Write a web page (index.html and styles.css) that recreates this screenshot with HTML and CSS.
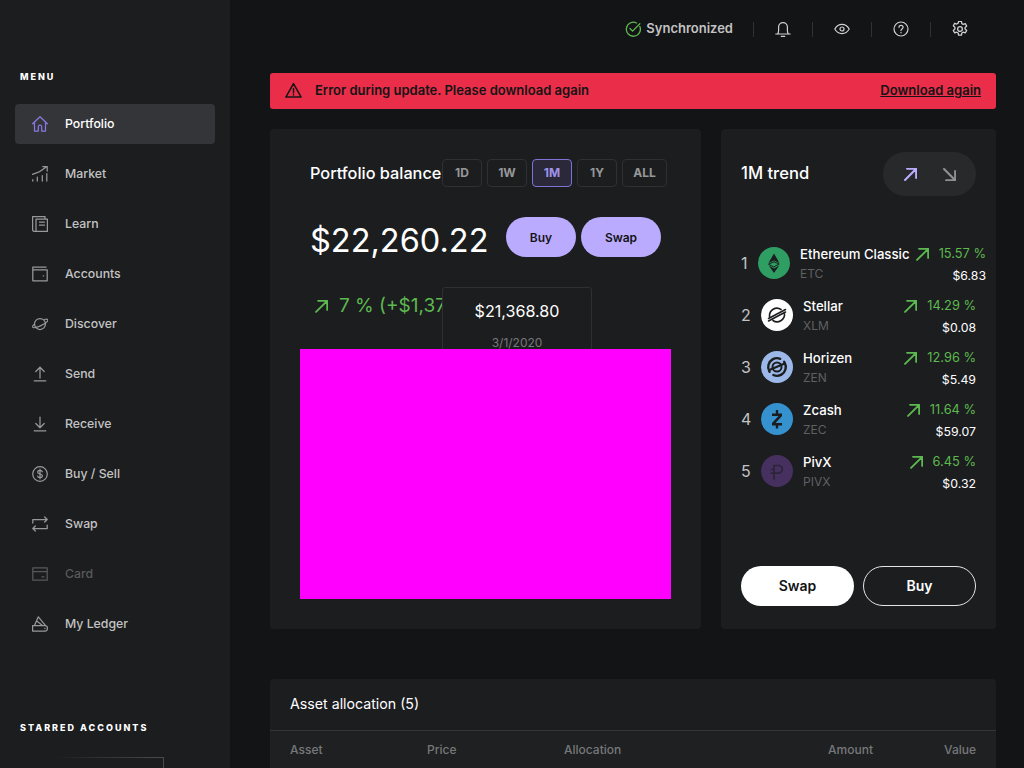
FILE: index.html
```html
<!DOCTYPE html>
<html lang="en">
<head>
    <meta charset="UTF-8">
    <meta name="viewport" content="width=device-width, initial-scale=1.0">
    <title>Portfolio</title>
    <link rel="stylesheet" href="styles.css">
</head>
<body>
    <div class="app">
        <!-- Sidebar -->
        <aside class="sidebar">
            <div class="side-title menu-title">MENU</div>
            <nav class="menu">
                <a class="menu-item active" href="#">
                    <svg class="menu-icon" viewBox="0 0 16 16"><path d="M.6 7.800 8 .8l7.400 7M2.500 6.300v8.700h3.800v-4.200a1.700 1.700 0 0 1 3.400 0V15h3.800V6.300"/></svg>
                    Portfolio
                </a>
                <a class="menu-item" href="#">
                    <svg class="menu-icon" viewBox="0 0 16 16"><path d="M.5 8.300C4 7 7.500 6.500 10 4L14.500.8M10.800.6h4.400V5M.8 13.500v1.500M5.300 11v4M10.300 9.500V15M14.800 7.500V15"/></svg>
                    Market
                </a>
                <a class="menu-item" href="#">
                    <svg class="menu-icon" viewBox="0 0 16 16"><path d="M13 3V.6H.6v12.900a1.900 1.900 0 0 0 1.900 1.900h12.900V3H4v12.300M7.500 6.200h5M7.500 9.200h5"/></svg>
                    Learn
                </a>
                <a class="menu-item" href="#">
                    <svg class="menu-icon" viewBox="0 0 16 16"><path d="M14 1.200H.8v13.600h14.400V3.800H.8M11.200 9.800h.4"/></svg>
                    Accounts
                </a>
                <a class="menu-item" href="#">
                    <svg class="menu-icon" viewBox="0 0 16 16"><circle cx="8" cy="8" r="5.500"/><path d="M12.600 3.500c1.800-.5 3-.4 3.200.3.400 1.300-2.700 3.900-6.800 5.800-4.200 1.900-7.800 2.600-8.400 1.400-.3-.7.400-1.700 1.800-2.900"/></svg>
                    Discover
                </a>
                <a class="menu-item" href="#">
                    <svg class="menu-icon" viewBox="0 0 16 16"><path d="M8 12V1.200M3.800 5.500 8 1.200l4.200 4.300M2.200 14.800h11.600"/></svg>
                    Send
                </a>
                <a class="menu-item" href="#">
                    <svg class="menu-icon" viewBox="0 0 16 16"><path d="M8 1v10.800M3.800 7.500 8 11.800l4.200-4.300M2.200 14.800h11.600"/></svg>
                    Receive
                </a>
                <a class="menu-item" href="#">
                    <svg class="menu-icon" viewBox="0 0 16 16"><circle cx="8" cy="8" r="7.300"/><path d="M10.300 5.800C10 4.800 9 4.400 8 4.400c-1.300 0-2.300.7-2.300 1.800C5.700 8.600 10.400 7.400 10.400 9.800c0 1.100-1 1.800-2.400 1.800-1.100 0-2.100-.5-2.400-1.500M8 3.200v9.600"/></svg>
                    Buy / Sell
                </a>
                <a class="menu-item" href="#">
                    <svg class="menu-icon" viewBox="0 0 16 16"><path d="M.8 7V3.500h14.400M12.700 1l2.500 2.500L12.700 6M15.200 9v3.500H.8M3.300 10 .8 12.500 3.300 15"/></svg>
                    Swap
                </a>
                <a class="menu-item disabled" href="#">
                    <svg class="menu-icon" viewBox="0 0 16 16"><path d="M.8 1.800h14.400v12.400H.8zM.8 5.500h14.400M9.800 10.800h2.200"/></svg>
                    Card
                </a>
                <a class="menu-item" href="#">
                    <svg class="menu-icon" viewBox="0 0 16 16"><path d="M.6 9.500h12.400a2.400 2.400 0 0 1 2.400 2.400v.8a2.400 2.400 0 0 1-2.400 2.300H.6zM2.500 9.500 6.300.8l7.300 8.900M5 5.300l5.500 4.200M12.700 12.300h.3"/></svg>
                    My Ledger
                </a>
            </nav>
            <div class="side-title starred-title">STARRED ACCOUNTS</div>
            <div class="starred-box"></div>
        </aside>

        <main class="main">
            <!-- Top bar -->
            <header class="topbar">
                <div class="sync">
                    <svg class="sync-icon" viewBox="0 0 16 16"><path d="M14.800 5.500A7 7 0 1 1 11.500 2M5 7.500l2.600 2.600L14.800 2.800"/></svg>
                    Synchronized
                </div>
                <span class="top-sep"></span>
                <button class="top-btn"><svg viewBox="0 0 16 16"><path d="M.8 13h14.400M2.600 13c.8-1 1-2 1-3.500V6a4.400 4.400 0 0 1 8.800 0v3.500c0 1.500.2 2.500 1 3.500M6.300 15.400h3.400"/></svg></button>
                <span class="top-sep"></span>
                <button class="top-btn"><svg viewBox="0 0 16 16"><path d="M.8 8C2.500 5 5 3.400 8 3.400S13.500 5 15.200 8c-1.700 3-4.200 4.600-7.200 4.600S2.500 11 .8 8z"/><circle cx="8" cy="8" r="2"/></svg></button>
                <span class="top-sep"></span>
                <button class="top-btn"><svg viewBox="0 0 16 16"><circle cx="8" cy="8" r="7"/><path d="M6 6.300C6 5 7 4.400 8 4.400s2.100.7 2.100 1.900c0 1.600-2.100 1.700-2.100 3.100M8 11.300v.5"/></svg></button>
                <span class="top-sep"></span>
                <button class="top-btn"><svg viewBox="0.600 0.600 14.800 14.800"><circle cx="8" cy="8" r="2.200"/><path d="M6.700 1h2.600l.4 2 1.300.7 1.900-.7 1.300 2.300-1.500 1.300v1.500l1.500 1.300-1.300 2.200-1.900-.6-1.300.7-.4 2H6.700l-.4-2-1.300-.7-1.900.6-1.300-2.200 1.500-1.300V6.300L1.800 5l1.300-2.300 1.900.7 1.300-.7z"/></svg></button>
            </header>

            <div class="alert">
                <svg class="alert-icon" viewBox="0 0 16 16"><path d="M8 1.500.8 14.200h14.400zM8 6v4.200M8 11.800v.4"/></svg>
                <span class="alert-text">Error during update. Please download again</span>
                <a class="alert-link" href="#">Download again</a>
            </div>

            <div class="cards">
                <section class="card balance">
                    <div class="balance-head">
                        <h2 class="balance-title">Portfolio balance</h2>
                        <div class="ranges">
                            <button class="range">1D</button>
                            <button class="range">1W</button>
                            <button class="range selected">1M</button>
                            <button class="range">1Y</button>
                            <button class="range">ALL</button>
                        </div>
                    </div>
                    <div class="amount-row">
                        <div class="amount">$22,260.22</div>
                        <div class="amount-actions">
                            <button class="pill pill-buy">Buy</button>
                            <button class="pill pill-swap">Swap</button>
                        </div>
                    </div>
                    <div class="change">
                        <svg class="change-icon" viewBox="1.500 2 12.500 12.500"><path d="M2.500 13.500 13 3M4.500 2.800h8.700v8.700"/></svg>
                        7 % (+$1,371.42)
                    </div>
                    <div class="tip">
                        <div class="tip-value">$21,368.80</div>
                        <div class="tip-date">3/1/2020</div>
                    </div>
                    <div class="chart"></div>
                </section>

                <section class="card trend">
                    <div class="trend-head">
                        <h2 class="trend-title">1M trend</h2>
                        <div class="toggle">
                            <svg class="toggle-up" viewBox="1.500 2 12.500 12.500"><path d="M2.500 13.500 13 3M4.500 2.800h8.700v8.700"/></svg>
                            <svg class="toggle-down" viewBox="1.500 1.500 12.500 12.500"><path d="M2.500 2.500 13 13M13.200 4.500v8.700H4.500"/></svg>
                        </div>
                    </div>
                    <ul class="coins">
                        <li class="coin coin-wide">
                            <span class="rank">1</span>
                            <svg class="coin-logo" viewBox="0 0 32 32"><circle cx="16" cy="16" r="16" fill="#2f9e63"/><path d="M16 6.500 10.500 16 16 13.500 21.500 16z" fill="#1c1d1f"/><path d="M10.800 17 16 14.800 21.200 17 16 19.800z" fill="#2f9e63" stroke="#1c1d1f"/><path d="M10.800 18.500 16 26l5.200-7.500L16 21.500z" fill="#1c1d1f"/></svg>
                            <div class="coin-name"><b>Ethereum Classic</b><span>ETC</span></div>
                            <div class="coin-nums">
                                <div class="coin-pct"><svg viewBox="1.500 2 12.500 12.500"><path d="M2.500 13.500 13 3M4.500 2.800h8.700v8.700"/></svg>15.57 %</div>
                                <div class="coin-price">$6.83</div>
                            </div>
                        </li>
                        <li class="coin">
                            <span class="rank">2</span>
                            <svg class="coin-logo" viewBox="0 0 32 32"><circle cx="16" cy="16" r="16" fill="#fff"/><path d="M8.500 17.500C8 11 15 7 20 10.500M23.500 14.500c.5 6.500-6.500 10.500-11.500 7M7.500 19.500 24.500 10.500M7.500 22 24.500 13" fill="none" stroke="#1c1d1f" stroke-width="1.600"/></svg>
                            <div class="coin-name"><b>Stellar</b><span>XLM</span></div>
                            <div class="coin-nums">
                                <div class="coin-pct"><svg viewBox="1.500 2 12.500 12.500"><path d="M2.500 13.500 13 3M4.500 2.800h8.700v8.700"/></svg>14.29 %</div>
                                <div class="coin-price">$0.08</div>
                            </div>
                        </li>
                        <li class="coin">
                            <span class="rank">3</span>
                            <svg class="coin-logo" viewBox="0 0 32 32"><circle cx="16" cy="16" r="16" fill="#9cb8e8"/><circle cx="16" cy="16" r="8.800" fill="none" stroke="#1c1d1f" stroke-width="2.400" stroke-dasharray="22 5" transform="rotate(-30 16 16)"/><path d="M9.500 18.500 22.500 13" stroke="#1c1d1f" stroke-width="2.400"/><circle cx="16" cy="16" r="4.500" fill="none" stroke="#1c1d1f" stroke-width="2"/></svg>
                            <div class="coin-name"><b>Horizen</b><span>ZEN</span></div>
                            <div class="coin-nums">
                                <div class="coin-pct"><svg viewBox="1.500 2 12.500 12.500"><path d="M2.500 13.500 13 3M4.500 2.800h8.700v8.700"/></svg>12.96 %</div>
                                <div class="coin-price">$5.49</div>
                            </div>
                        </li>
                        <li class="coin">
                            <span class="rank">4</span>
                            <svg class="coin-logo" viewBox="0 0 32 32"><circle cx="16" cy="16" r="16" fill="#3592cf"/><path d="M11 10.500h10v2.500l-6.500 7H21v2.500H11V20l6.500-7H11zM14.800 7h2.400v3.500h-2.400zM14.800 22h2.400v3.500h-2.400z" fill="#1c1d1f"/></svg>
                            <div class="coin-name"><b>Zcash</b><span>ZEC</span></div>
                            <div class="coin-nums">
                                <div class="coin-pct"><svg viewBox="1.500 2 12.500 12.500"><path d="M2.500 13.500 13 3M4.500 2.800h8.700v8.700"/></svg>11.64 %</div>
                                <div class="coin-price">$59.07</div>
                            </div>
                        </li>
                        <li class="coin">
                            <span class="rank">5</span>
                            <svg class="coin-logo" viewBox="0 0 32 32"><circle cx="16" cy="16" r="16" fill="#45305f"/><path d="M13 24V10.500h4.500a3.800 3.800 0 0 1 0 7.600H10.500M10.500 14.500H13" fill="none" stroke="#2c2438" stroke-width="1.700"/></svg>
                            <div class="coin-name"><b>PivX</b><span>PIVX</span></div>
                            <div class="coin-nums">
                                <div class="coin-pct"><svg viewBox="1.500 2 12.500 12.500"><path d="M2.500 13.500 13 3M4.500 2.800h8.700v8.700"/></svg>6.45 %</div>
                                <div class="coin-price">$0.32</div>
                            </div>
                        </li>
                    </ul>
                    <div class="trend-actions">
                        <button class="trend-btn solid">Swap</button>
                        <button class="trend-btn outline">Buy</button>
                    </div>
                </section>
            </div>

            <section class="card allocation">
                <div class="allocation-head">Asset allocation (5)</div>
                <div class="allocation-cols">
                    <span class="col-asset">Asset</span>
                    <span class="col-price">Price</span>
                    <span class="col-alloc">Allocation</span>
                    <span class="col-amount">Amount</span>
                    <span class="col-value">Value</span>
                </div>
            </section>
        </main>
    </div>
</body>
</html>
```

FILE: styles.css
```css
* {
    box-sizing: border-box;
}

html, body {
    height: 768px;
    margin: 0;
    overflow: hidden;
}

body {
    font-family: Inter, "Liberation Sans", sans-serif;
    background-color: #131415;
    color: #fff;
}

button {
    font-family: inherit;
}

svg {
    fill: none;
    stroke-linecap: round;
    stroke-linejoin: round;
}

.app {
    display: flex;
    height: 768px;
}

/* Sidebar */
.sidebar {
    width: 230px;
    flex-shrink: 0;
    height: 768px;
    overflow: hidden;
    background-color: #1c1d1f;
    padding: 71px 15px 0;
}

.side-title {
    font-size: 9px;
    line-height: 12px;
    font-weight: 800;
    letter-spacing: 2px;
    color: #fff;
    padding-left: 5px;
}

.menu {
    display: flex;
    flex-direction: column;
    gap: 10px;
    margin-top: 21px;
}

.menu-item {
    display: flex;
    align-items: center;
    gap: 17px;
    width: 200px;
    height: 40px;
    padding: 0 0 2px 17px;
    border-radius: 4px;
    color: #c3c3c4;
    font-size: 12.300px;
    font-weight: 500;
    text-decoration: none;
}

.menu-item.active {
    background-color: #343538;
    color: #fff;
}

.menu-item.disabled {
    color: #58595b;
}

.menu-icon {
    width: 16px;
    height: 16px;
    margin-top: 2px;
    stroke: #97989a;
    stroke-width: 1.250;
    flex-shrink: 0;
}

.active .menu-icon {
    stroke: #8a78e0;
}

.disabled .menu-icon {
    stroke: #58595b;
}

.starred-title {
    margin-top: 78px;
}

.starred-box {
    width: 110px;
    height: 40px;
    margin: 23px 0 0 39px;
    border-top: 1px solid;
    border-right: 1px solid;
    border-image: linear-gradient(to right, transparent, #4a4b4e) 1;
}

/* Main column */
.main {
    flex: 1;
    min-width: 0;
    padding: 0 28px 0 40px;
}

.topbar {
    display: flex;
    align-items: center;
    justify-content: flex-end;
    height: 58px;
    padding-right: 28px;
}

.sync {
    display: flex;
    align-items: center;
    gap: 5px;
    padding-bottom: 2px;
    font-size: 13px;
    font-weight: 600;
    color: #c3c3c4;
}

.sync-icon {
    width: 16px;
    height: 16px;
    margin-top: 2px;
    stroke: #5db94f;
    stroke-width: 1.300;
}

.top-sep {
    width: 1px;
    height: 15px;
    margin-left: 21px;
    background-color: #303134;
}

.sync + .top-sep {
    margin-left: 20px;
}

.top-btn {
    width: 16px;
    height: 16px;
    margin-left: 21px;
    padding: 0;
    border: none;
    background: none;
    display: flex;
}

.top-btn svg {
    width: 16px;
    height: 16px;
    stroke: #d0d0d1;
    stroke-width: 1.200;
}

.alert {
    display: flex;
    align-items: center;
    height: 36px;
    margin-top: 15px;
    padding: 0 15px 2px;
    border-radius: 3px;
    background-color: #ea2e49;
    color: #131415;
    font-size: 13px;
    font-weight: 600;
}

.alert-icon {
    width: 17px;
    height: 17px;
    stroke: #131415;
    stroke-width: 1.400;
    margin-right: 13px;
}

.alert-text {
    flex: 1;
}

.alert-link {
    color: #131415;
}

.cards {
    display: flex;
    gap: 20px;
    margin-top: 20px;
}

.card {
    background-color: #1c1d1f;
    border-radius: 4px;
}

/* Balance card */
.balance {
    position: relative;
    width: 431px;
    height: 500px;
    padding: 30px 30px 0 40px;
}

.balance-head {
    display: flex;
    align-items: center;
    height: 28px;
}

.balance-title {
    margin: 0;
    width: 132px;
    flex-shrink: 0;
    font-size: 16.300px;
    font-weight: 500;
    white-space: nowrap;
}

.ranges {
    display: flex;
    gap: 5px;
}

.range {
    width: 40px;
    height: 28px;
    padding: 0 0 2px;
    border: 1px solid #2f3033;
    border-radius: 4px;
    background: none;
    color: #969799;
    font-size: 12px;
    font-weight: 700;
}

.range:last-child {
    width: 45px;
}

.range.selected {
    border-color: #7f72d6;
    background-color: #2a2839;
    color: #9f92ea;
}

.amount-row {
    display: flex;
    align-items: center;
    margin-top: 30px;
}

.amount {
    width: 196px;
    font-size: 32.500px;
    font-weight: 400;
    line-height: 48px;
    white-space: nowrap;
}

.amount-actions {
    display: flex;
    gap: 5px;
    margin-bottom: 8px;
}

.pill {
    height: 40px;
    padding: 0;
    border: none;
    border-radius: 20px;
    background-color: #bbabff;
    color: #131415;
    font-size: 12px;
    font-weight: 600;
}

.pill-buy {
    width: 70px;
}

.pill-swap {
    width: 80px;
}

.change {
    display: flex;
    align-items: center;
    gap: 11px;
    margin-top: 29px;
    padding-left: 5px;
    color: #5db94f;
    font-size: 19px;
    line-height: 24px;
    white-space: nowrap;
}

.change-icon {
    width: 13px;
    height: 13px;
    stroke: #5db94f;
    stroke-width: 1.700;
}

.tip {
    position: absolute;
    left: 172px;
    top: 158px;
    width: 150px;
    height: 80px;
    border: 1px solid #2f3033;
    border-radius: 3px;
    background-color: #1c1d1f;
    text-align: center;
}

.tip-value {
    margin-top: 13px;
    font-size: 16.100px;
    line-height: 20px;
}

.tip-date {
    margin-top: 14px;
    font-size: 12px;
    line-height: 16px;
    color: #77787a;
}

.chart {
    position: absolute;
    left: 30px;
    top: 220px;
    width: 371px;
    height: 250px;
    background-color: #ff00ff;
}

/* Trend card */
.trend {
    width: 275px;
    height: 500px;
    padding: 23px 20px 0;
    display: flex;
    flex-direction: column;
}

.trend-head {
    display: flex;
    align-items: center;
    justify-content: space-between;
}

.trend-title {
    margin: 0 0 2px;
    font-size: 16.600px;
    font-weight: 500;
}

.toggle {
    display: flex;
    align-items: center;
    gap: 26px;
    width: 93px;
    height: 44px;
    padding-left: 21px;
    border-radius: 22px;
    background-color: #28292b;
}

.toggle svg {
    width: 13px;
    height: 13px;
    stroke-width: 2;
}

.toggle-up {
    stroke: #bbabff;
}

.toggle-down {
    stroke: #8f9092;
}

.coins {
    list-style: none;
    margin: 41px 0 0;
    padding: 0;
}

.coin {
    display: flex;
    align-items: center;
    height: 52px;
}

.rank {
    width: 20px;
    font-size: 16px;
    color: #c3c3c4;
    flex-shrink: 0;
}

.coin-logo {
    width: 32px;
    height: 32px;
    flex-shrink: 0;
}

.coin-name {
    flex: 1;
    margin-left: 10px;
    padding-top: 2px;
    white-space: nowrap;
}

.coin-name b {
    display: block;
    font-size: 13.200px;
    line-height: 16px;
    font-weight: 500;
}

.coin-name span {
    display: block;
    margin-top: 4px;
    font-size: 12px;
    line-height: 16px;
    color: #5f6062;
}

.coin-nums {
    padding-top: 4px;
    text-align: right;
    white-space: nowrap;
}

.coin-pct {
    display: flex;
    align-items: center;
    justify-content: flex-end;
    gap: 10px;
    color: #5db94f;
    font-size: 12.800px;
    line-height: 16px;
}

.coin-pct svg {
    width: 13px;
    height: 13px;
    stroke: #5db94f;
    stroke-width: 1.800;
}

.coin-price {
    margin-top: 6px;
    font-size: 12.300px;
    line-height: 16px;
}

.coin-wide .coin-name {
    margin-left: 10px;
}

.coin-wide .coin-nums {
    margin-right: -10px;
}

.coin-wide .rank {
    width: 17px;
}

.trend-actions {
    display: flex;
    justify-content: space-between;
    margin-top: auto;
    margin-bottom: 23px;
}

.trend-btn {
    width: 113px;
    height: 40px;
    padding: 0 0 2px;
    border-radius: 20px;
    font-size: 14px;
    font-weight: 600;
}

.trend-btn.solid {
    border: none;
    background-color: #fff;
    color: #131415;
}

.trend-btn.outline {
    border: 1px solid #e5e5e5;
    background: none;
    color: #fff;
}

/* Asset allocation */
.allocation {
    margin-top: 50px;
}

.allocation-head {
    height: 52px;
    padding: 16px 20px 0;
    border-bottom: 1px solid #343538;
    font-size: 14.200px;
    line-height: 18px;
}

.allocation-cols {
    display: flex;
    height: 50px;
    padding: 11px 20px 0;
    background-color: #1f2022;
    color: #77787a;
    font-size: 12px;
    line-height: 16px;
    font-weight: 500;
}

.col-asset {
    width: 137px;
}

.col-price {
    width: 137px;
}

.col-alloc {
    flex: 1;
}

.col-amount {
    margin-right: 71px;
}

.col-value {
    text-align: right;
}
```
